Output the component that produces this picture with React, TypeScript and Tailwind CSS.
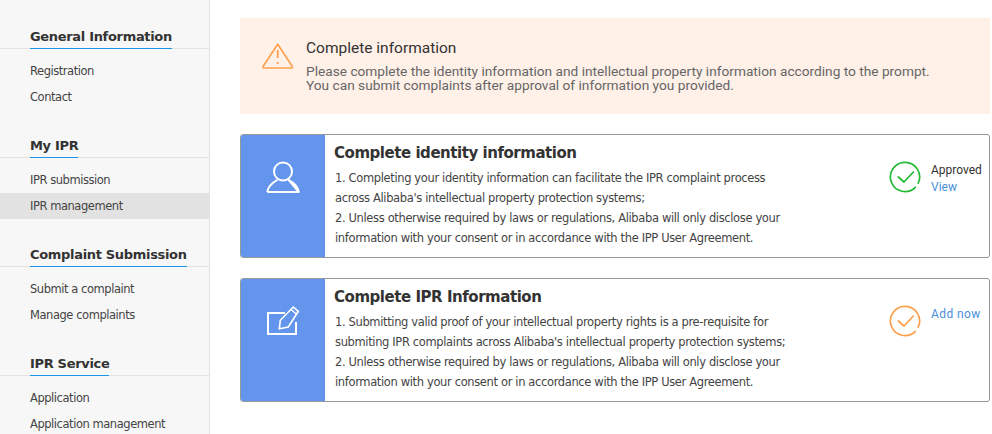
function Section({ title, items, active }: { title: string; items: string[]; active?: string }) {
  return (
    <div className="mb-[20px]">
      <div className="border-b border-[#e3e3e3] pl-[30px] h-[28px]">
        <span className="inline-block h-[28px] border-b border-[#1a96e8] pt-[7px] text-[13px] leading-[18px] font-bold text-[#333] font-['DejaVu_Sans',sans-serif] tracking-[-0.32px] whitespace-nowrap">
          {title}
        </span>
      </div>
      <ul className="pt-[9px]">
        {items.map((item) => (
          <li
            key={item}
            className={`h-[26px] pl-[30px] text-[11.5px] leading-[26px] text-[#444] font-['DejaVu_Sans',sans-serif] tracking-[-0.45px] ${item === active ? "bg-[#e2e2e2]" : ""}`}
          >
            {item}
          </li>
        ))}
      </ul>
    </div>
  );
}

function Ring({ color }: { color: string }) {
  return (
    <svg width="32" height="32" viewBox="0 0 32 32" fill="none" stroke={color} strokeWidth="1.7" strokeLinecap="round" strokeLinejoin="round" className="shrink-0">
      <path d="M26.3 26.3 A14.6 14.6 0 1 1 29.2 22.2" />
      <path d="M9.4 16 L15 21 L24.4 11" />
    </svg>
  );
}

function UserIcon() {
  return (
    <svg width="36" height="34" viewBox="0 0 36 34" fill="none" stroke="#fff" strokeWidth="2" strokeLinejoin="round">
      <circle cx="18" cy="11.5" r="9" />
      <path d="M2.2 32 C3 26.5 7.5 22.5 12.5 19.8 M23.5 19.8 C28.5 22.5 33 26.5 33.8 32 Z M2.2 32 H33.8" />
    </svg>
  );
}

function EditIcon() {
  return (
    <svg width="36" height="32" viewBox="0 0 36 32" fill="none" stroke="#fff" strokeWidth="2" strokeLinejoin="miter">
      <path d="M20 8 H3 V29 H31 V17" />
      <path d="M14.3 23.7 L15.3 15.3 L28.3 2 L33.3 6.3 L23.3 22 Z" strokeWidth="1.6" />
      <path d="M26 4.4 L31 8.8" strokeWidth="1.3" />
    </svg>
  );
}

function Card({
  title,
  lines,
  icon,
  iconClass,
  status,
}: {
  title: string;
  lines: string[];
  icon: React.ReactNode;
  iconClass: string;
  status: React.ReactNode;
}) {
  return (
    <div className="flex h-[124px] rounded-[3px] border border-[#999] overflow-hidden">
      <div className={`w-[84px] shrink-0 bg-[#6495ed] flex justify-center ${iconClass}`}>{icon}</div>
      <div className="flex-1 pl-[10px] pt-[6px]">
        <h2 className="-ml-px text-[15px] leading-[24px] font-bold text-[#333] font-['DejaVu_Sans',sans-serif] tracking-[-0.46px] whitespace-nowrap">{title}</h2>
        <div className="mt-[3px] text-[11.5px] leading-[20px] text-[#444] font-['DejaVu_Sans',sans-serif] tracking-[-0.36px]">
          {lines.map((l) => (
            <p key={l} className="whitespace-nowrap">{l}</p>
          ))}
        </div>
      </div>
      {status}
    </div>
  );
}

export default function App() {
  return (
    <div className="flex w-[992px] h-[434px] overflow-hidden bg-white">
      <aside className="w-[210px] shrink-0 h-full bg-[#f7f7f7] border-r border-[#e3e3e3] pt-[21px]">
        <Section title="General Information" items={["Registration", "Contact"]} />
        <Section title="My IPR" items={["IPR submission", "IPR management"]} active="IPR management" />
        <Section title="Complaint Submission" items={["Submit a complaint", "Manage complaints"]} />
        <Section title="IPR Service" items={["Application", "Application management"]} />
      </aside>
      <main className="w-[750px] ml-[30px] pt-[18px]">
        <div className="flex h-[96px] bg-[#fff0e8] font-['Roboto',sans-serif]">
          <svg width="32" height="28" viewBox="0 0 32 28" fill="none" stroke="#ff9f4d" strokeWidth="1.6" strokeLinejoin="round" className="ml-[22px] mt-[24px] shrink-0">
            <path d="M15.7 2.2 L30.2 24.3 Q31 26 29.2 26 H2.2 Q0.4 26 1.2 24.3 Z" />
            <path d="M15.7 8 V16" strokeWidth="1.8" />
            <path d="M15.7 20 V22" strokeWidth="1.8" />
          </svg>
          <div className="ml-[12px] pt-[20px]">
            <div className="text-[15.5px] leading-[20px] text-[#333]">Complete information</div>
            <p className="mt-[6px] text-[13.7px] leading-[14px] text-[#666] whitespace-nowrap">
              Please complete the identity information and intellectual property information according to the prompt.
              <br />
              You can submit complaints after approval of information you provided.
            </p>
          </div>
        </div>
        <div className="mt-[20px] flex flex-col gap-[20px]">
          <Card
            title="Complete identity information"
            icon={<UserIcon />}
            iconClass="pt-[25px]"
            lines={[
              "1. Completing your identity information can facilitate the IPR complaint process",
              "across Alibaba's intellectual property protection systems;",
              "2. Unless otherwise required by laws or regulations, Alibaba will only disclose your",
              "information with your consent or in accordance with the IPP User Agreement.",
            ]}
            status={
              <div className="w-[100px] shrink-0 flex gap-[10px] pt-[26px] -ml-px">
                <Ring color="#22bb33" />
                <div className="pt-px text-[12px] leading-[17px] font-['Roboto',sans-serif] whitespace-nowrap">
                  <div className="text-[#333]">Approved</div>
                  <div className="text-[#4a90d9]">View</div>
                </div>
              </div>
            }
          />
          <Card
            title="Complete IPR Information"
            icon={<EditIcon />}
            iconClass="pt-[26px]"
            lines={[
              "1. Submitting valid proof of your intellectual property rights is a pre-requisite for",
              "submiting IPR complaints across Alibaba's intellectual property protection systems;",
              "2. Unless otherwise required by laws or regulations, Alibaba will only disclose your",
              "information with your consent or in accordance with the IPP User Agreement.",
            ]}
            status={
              <div className="w-[100px] shrink-0 flex gap-[10px] pt-[26px] -ml-px">
                <Ring color="#ff9f4d" />
                <div className="text-[12px] leading-[18px] font-['Roboto',sans-serif] tracking-[0.4px] text-[#4a90d9] whitespace-nowrap">
                  Add now
                </div>
              </div>
            }
          />
        </div>
      </main>
    </div>
  );
}
